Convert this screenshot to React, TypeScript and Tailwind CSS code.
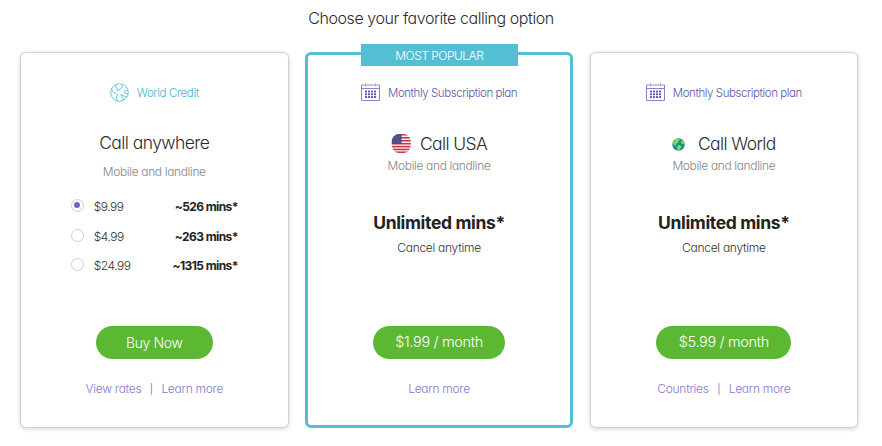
import React from 'react'
import clsx from 'clsx'

interface Rate {
  price: string
  mins: string
}

const rates: Rate[] = [
  { price: '$9.99', mins: '~526 mins*' },
  { price: '$4.99', mins: '~263 mins*' },
  { price: '$24.99', mins: '~1315 mins*' },
]

function GlobeOutlineIcon() {
  return (
    <svg width="20" height="20" viewBox="0 0 20 20" fill="none" stroke="#5bc0d6" strokeWidth="0.9" strokeLinejoin="round">
      <circle cx="9.5" cy="9.5" r="8.8" />
      <path d="M6 1.6 L5.6 4.6 L7.4 5.4 L7.2 7.6 L9.2 7.2 L10.2 5.6 L12.4 4.4 L11.6 2.9 L12.6 1.6" />
      <path d="M1.6 5.8 L2.6 8.6 L5.2 10 L7.8 12 L6.4 14 L7.2 18" />
      <path d="M18.2 8 L16 7 L14 8.6 L15 10.2 L18.2 10.8" />
      <path d="M17 14 L14.6 13.4 L10.8 11.6 L12 14.4 L13.8 17" />
    </svg>
  )
}

function CalendarIcon() {
  return (
    <svg width="19" height="19" viewBox="0 0 19 19" fill="none" stroke="#8074c4" strokeWidth="0.9">
      <path d="M3.8 2H0.5V17.5H18.5V2H15.2M5.6 2H13.4" />
      <path d="M0.5 5.5H18.5" />
      <path d="M4.7 0.3V3.4M14.3 0.3V3.4" />
      <g fill="#5d4fae" stroke="none">
        {[7.4, 10.2, 13].map((y) =>
          [4, 7, 10, 13].map((x) => <rect key={`${x}-${y}`} x={x} y={y} width="2" height="2" rx="0.5" />)
        )}
      </g>
    </svg>
  )
}

function UsaFlagIcon() {
  return (
    <svg width="20" height="20" viewBox="0 0 20 20">
      <defs>
        <clipPath id="flag">
          <rect x="0.8" y="0" width="19" height="19" rx="7.5" />
        </clipPath>
      </defs>
      <g clipPath="url(#flag)">
        <rect width="20" height="20" fill="#f6eef0" />
        {[0, 3, 6, 9, 11.9, 14.7, 17.5].map((y) => (
          <rect key={y} y={y} width="20" height="1.5" fill="#c8324a" />
        ))}
        <rect width="10.5" height="9.9" fill="#4b4d86" />
        <g fill="#8f90b6">
          {[2.2, 4.6, 7].map((y) => [2.8, 5.4, 8].map((x) => <circle key={`${x}-${y}`} cx={x} cy={y} r="0.45" />))}
        </g>
      </g>
    </svg>
  )
}

function GlobeIcon() {
  return (
    <svg width="13" height="13" viewBox="0 0 13 13">
      <circle cx="6.5" cy="6.5" r="6.2" fill="#12938f" />
      <g fill="#8fd84c">
        <path d="M3.4 1.4 L6.8 0.5 L7.8 2 L6.2 3.4 L5.8 5 L3.8 5.8 L4.6 7.4 L3 7.6 L0.6 5.4 Z" />
        <path d="M9.4 2.2 L11.4 3.2 L12.4 5.6 L10.6 6.2 L8.8 4.6 Z" />
        <path d="M6.2 7 L8.8 7.6 L9 9.4 L7 12.4 L5.6 12.2 L5.2 9.4 Z" />
      </g>
    </svg>
  )
}

interface PlanCardProps {
  popular?: boolean
  icon: React.ReactNode
  label: string
  labelClass: string
  children: React.ReactNode
  action: string
  actionClass: string
  links: string[]
}

function PlanCard({ popular, icon, label, labelClass, children, action, actionClass, links }: PlanCardProps) {
  return (
    <section
      className={clsx(
        'relative h-[376px] w-[268.5px] rounded-md bg-white text-center',
        popular
          ? 'border-3 border-[#54bfd3] pt-[26px]'
          : 'border border-[#d2d2d2] pt-[28px] shadow-[0_1px_4px_rgba(0,0,0,0.18)]'
      )}
    >
      {popular && (
        <div className="absolute -top-[11px] left-[53px] h-[22px] w-[157px] bg-[#54bfd3] text-[12px] leading-[23px] tracking-[-0.5px] text-white">
          MOST POPULAR
        </div>
      )}
      <div className={clsx('flex h-6 items-center justify-center text-[11.5px]', labelClass)}>
        {icon}
        <span className="pt-[3px]">{label}</span>
      </div>
      <div className="flow-root h-[221px]">{children}</div>
      <button className={clsx('mx-auto block h-[33px] rounded-full bg-[#5cb832] text-white', actionClass)}>{action}</button>
      <div className="mt-5 flex h-5 items-center justify-center text-[12px] tracking-[-0.28px] text-[#8577cf]">
        {links.map((link, i) => (
          <React.Fragment key={link}>
            {i > 0 && <span className="w-5 pt-px text-[10px] font-normal">|</span>}
            <a>{link}</a>
          </React.Fragment>
        ))}
      </div>
    </section>
  )
}

function UnlimitedPlan({ flag, name }: { flag: React.ReactNode; name: string }) {
  return (
    <>
      <div className="mt-[28px] flex h-[23px] items-center justify-center">
        {flag}
        <span className="pt-px text-[17.5px] tracking-[-0.6px]">{name}</span>
      </div>
      <p className="h-5 text-[12px] leading-5 tracking-[-0.37px] text-[#858585]">Mobile and landline</p>
      <p className="mt-[35px] h-6 text-[17.5px] leading-6 font-bold tracking-[-0.35px] text-[#222]">Unlimited mins*</p>
      <p className="mt-[3px] h-5 text-[12px] leading-5 tracking-[-0.29px] text-[#333]">Cancel anytime</p>
    </>
  )
}

export default function App() {
  return (
    <main className="h-[446px] w-[882px] overflow-hidden bg-white font-['Inter','Liberation_Sans',sans-serif] font-light text-[#2b2b2b] [font-feature-settings:'cv11']">
      <h1 className="h-[51.5px] pr-[20px] pt-[6px] text-center text-[16px] leading-6 tracking-[-0.43px]">
        Choose your favorite calling option
      </h1>
      <div className="flex gap-[16.3px] pl-5">
        <PlanCard
          icon={<GlobeOutlineIcon />}
          label="World Credit"
          labelClass="gap-[7px] tracking-[-0.37px] text-[#3fb6cc]"
          action="Buy Now"
          actionClass="w-[117px] text-[14px] tracking-[-0.4px]"
          links={['View rates', 'Learn more']}
        >
          <h2 className="mt-[26px] h-6 text-[17.5px] leading-6 tracking-[-0.57px]">Call anywhere</h2>
          <p className="mt-[7px] h-5 text-[12px] leading-5 tracking-[-0.37px] text-[#858585]">Mobile and landline</p>
          <div className="mx-auto mt-[9px] w-[167px]">
            {rates.map((rate, i) => (
              <label key={rate.price} className="flex h-[29.7px] items-center text-[12px] text-[#333]">
                <span className="flex size-[13px] items-center justify-center rounded-full border border-[#cfcfcf]">
                  {i === 0 && <span className="size-[6px] rounded-full bg-[#7562c8]" />}
                </span>
                <span className="ml-[10px] pt-[3px] tracking-[-0.5px]">{rate.price}</span>
                <span className="ml-auto pt-[3px] font-bold tracking-[-0.6px] text-[#222]">{rate.mins}</span>
              </label>
            ))}
          </div>
        </PlanCard>
        <PlanCard
          popular
          icon={<CalendarIcon />}
          label="Monthly Subscription plan"
          labelClass="gap-2 tracking-[-0.43px] text-[#5f52ad]"
          action="$1.99 / month"
          actionClass="w-[132px] text-[14.5px] tracking-[-0.35px]"
          links={['Learn more']}
        >
          <UnlimitedPlan flag={<span className="mr-[9px]"><UsaFlagIcon /></span>} name="Call USA" />
        </PlanCard>
        <PlanCard
          icon={<CalendarIcon />}
          label="Monthly Subscription plan"
          labelClass="gap-2 tracking-[-0.43px] text-[#5f52ad]"
          action="$5.99 / month"
          actionClass="w-[135px] text-[14.5px] tracking-[-0.35px]"
          links={['Countries', 'Learn more']}
        >
          <UnlimitedPlan flag={<span className="mr-[13px]"><GlobeIcon /></span>} name="Call World" />
        </PlanCard>
      </div>
    </main>
  )
}
